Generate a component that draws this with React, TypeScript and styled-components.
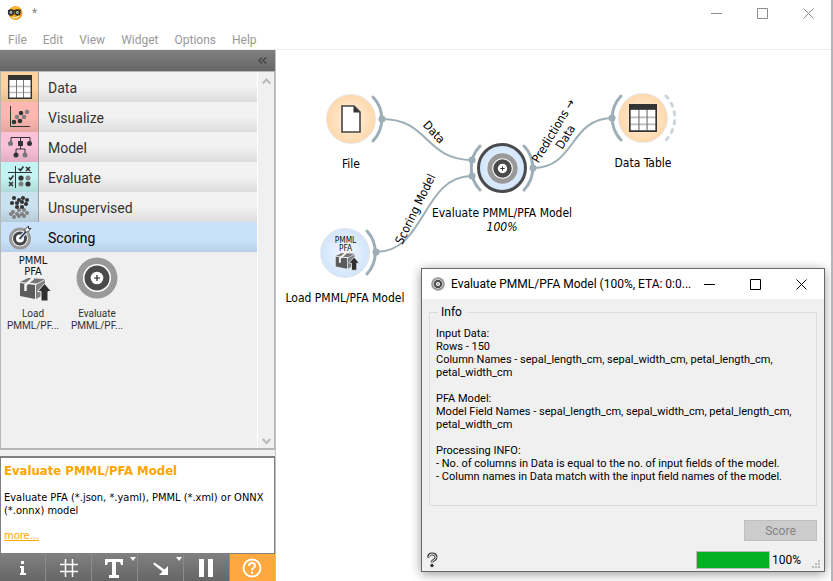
import React from "react";
import styled, { createGlobalStyle, css } from "styled-components";

const tahoma = `"DejaVu Sans Condensed", "DejaVu Sans", sans-serif`;
const segoe = `Roboto, "Noto Sans", sans-serif`;

const GlobalStyle = createGlobalStyle`
  * { box-sizing: border-box; }
  body { margin: 0; background: #fff; font-family: ${tahoma}; }
  button { font: inherit; color: inherit; border: 0; padding: 0; background: none; }
  svg { flex: none; }
`;

const Window = styled.div`
  display: flex;
  flex-direction: column;
  height: 100vh;
  overflow: hidden;
  border-right: 2px solid #b4b4bc;
  background: #fff;
`;

const TitleBar = styled.header`
  display: flex;
  align-items: center;
  height: 28px;
  padding: 0 0 2px 7px;
  gap: 9px;
  color: #888;
  font: 12px ${segoe};
`;

const TitleText = styled.span`
  flex: 1;
  min-width: 0;
  white-space: nowrap;
`;

const WindowButtons = styled.div`
  display: flex;
  flex: none;
`;

const WindowButton = styled.button<{ $tone: string }>`
  display: flex;
  align-items: center;
  justify-content: center;
  width: 46px;
  height: 28px;
  color: ${(p) => p.$tone};
`;

const MenuBar = styled.nav`
  display: flex;
  height: 22px;
  padding-left: 8px;
  gap: 16px;
  border-bottom: 1px solid #eee;
  color: #999;
  font: 12px/25px ${segoe};
`;

const Main = styled.div`
  display: flex;
  flex: 1;
  min-height: 0;
`;

const Sidebar = styled.aside`
  display: flex;
  flex-direction: column;
  width: 275px;
  flex: none;
  background: #f0f0f0;
`;

const DockHeader = styled.div`
  display: flex;
  align-items: center;
  justify-content: flex-end;
  height: 21px;
  padding-right: 8px;
  color: #444;
  background: linear-gradient(#808080, #666);
`;

const ToolBox = styled.div`
  display: flex;
  flex: 1;
  min-height: 0;
  border: 1px solid #b4b8b8;
  border-width: 1px 1px 2px;
`;

const Categories = styled.div`
  flex: 1;
  border-right: 1px solid #fff;
`;

const CategoryTab = styled.button<{ $active?: boolean }>`
  display: flex;
  align-items: stretch;
  width: 100%;
  height: 30px;
  text-align: left;
  color: ${(p) => (p.$active ? "#000" : "#333")};
  font: 14px/32px ${segoe};
  background: ${(p) =>
    p.$active
      ? "linear-gradient(#cae1fc 60%, #b8cfea)"
      : "linear-gradient(#f2f2f2 50%, #dcdcdc)"};
`;

const CategoryIcon = styled.span<{ $tint?: string }>`
  display: flex;
  align-items: center;
  justify-content: center;
  height: 30px;
  width: 38px;
  margin-right: 9px;
  border-right: 1px solid ${(p) => (p.$tint ? "#a0a0a0" : "transparent")};
  ${(p) =>
    p.$tint &&
    css`
      background: linear-gradient(transparent 50%, rgba(0, 0, 0, 0.1)), ${p.$tint};
    `}
`;

const WidgetGrid = styled.div`
  display: flex;
  padding-top: 2px;
`;

const WidgetButton = styled.button`
  display: flex;
  flex-direction: column;
  align-items: center;
  width: 64px;
  gap: 6px;
  color: #333;
  font-family: ${segoe};
  font-size: 10px;
  line-height: 12px;
`;

const WidgetIcon = styled.span`
  display: flex;
  align-items: center;
  height: 48px;
`;

const ScrollBar = styled.div`
  display: flex;
  flex-direction: column;
  justify-content: space-between;
  align-items: center;
  width: 16px;
  padding: 6px 0 3px;
  color: #b8b8b8;
`;

const Description = styled.section`
  height: 98px;
  margin-top: 6px;
  padding: 6px 3px;
  border: 1px solid #808080;
  border-top-width: 2px;
  background: #fff;
  color: #000;
  font-size: 11px;
  line-height: 13px;
`;

const DescriptionTitle = styled.h2`
  margin: 0 0 13px;
  color: #ffa500;
  font-size: 13px;
  line-height: 14px;
`;

const Paragraph = styled.p`
  margin: 0 0 12px;
`;

const MoreLink = styled.a`
  color: #ffa500;
`;

const ToolBar = styled.div`
  display: grid;
  grid-template-columns: repeat(5, 46px) 1fr;
  height: 27px;
  background: linear-gradient(#808080, #666);
`;

const ToolButton = styled.button<{ $highlight?: boolean }>`
  display: flex;
  align-items: center;
  justify-content: center;
  border-right: 1px solid ${(p) => (p.$highlight ? "transparent" : "#8c8c8c")};
  color: #fff;
  ${(p) => p.$highlight && "background: #ffa840;"}
`;

const Canvas = styled.main`
  position: relative;
  flex: 1;
  overflow: hidden;
  border-left: 1px solid #c0c0c8;
  background: #fff;
`;

const Links = styled.svg`
  position: absolute;
  inset: 0;
  width: 100%;
  height: 100%;
  font: 12px ${tahoma};
`;

const Node = styled.div<{ $x: number; $y: number }>`
  position: absolute;
  left: ${(p) => p.$x}px;
  top: ${(p) => p.$y}px;
  display: flex;
  flex-direction: column;
  align-items: center;
  width: 160px;
  margin: -25px 0 0 -80px;
  gap: 13px;
  text-align: center;
  font-size: 12px;
  line-height: 14px;
  color: #000;
`;

const NodeDisc = styled.div<{ $kind: "data" | "scoring"; $selected?: boolean }>`
  display: flex;
  align-items: center;
  justify-content: center;
  width: 50px;
  height: 50px;
  border-radius: 50%;
  border: ${(p) => (p.$selected ? "3px solid #4a4a4c" : "1px solid #e4e6e8")};
  background: ${(p) =>
    p.$kind === "data"
      ? "radial-gradient(#fff1e0, #ffcf98)"
      : "radial-gradient(#f4f9ff, #c4ddfb)"};
`;

const Progressed = styled.em`
  display: block;
`;

const Dialog = styled.section`
  position: absolute;
  left: 145px;
  top: 218px;
  width: 404px;
  border: 1px solid #66686a;
  background: #f0f0f0;
  box-shadow: 0 2px 10px rgba(0, 0, 0, 0.4);
`;

const DialogTitle = styled.header`
  display: flex;
  align-items: center;
  height: 30px;
  padding: 0 0 0 9px;
  gap: 6px;
  background: #fff;
  color: #000;
  font: 12px ${segoe};
`;

const DialogBody = styled.div`
  padding: 6px 7px 1px;
`;

const InfoGroup = styled.fieldset`
  height: 201px;
  margin: 0;
  padding: 8px 6px;
  border: 1px solid #dcdcdc;
  font: 11px/13px ${segoe};
`;

const Legend = styled.legend`
  margin-left: 2px;
  padding: 0 5px 0 3px;
  font: 12px/14px ${segoe};
`;

const Lines = styled.p`
  margin: 0 0 13px;
  white-space: pre-line;
`;

const Actions = styled.div`
  display: flex;
  justify-content: flex-end;
  margin-top: 14px;
`;

const ScoreButton = styled.button`
  && {
    width: 73px;
    height: 21px;
    border: 1px solid #bfbfbf;
    background: #ccc;
    color: #838383;
    font: 12px ${segoe};
  }
`;

const StatusBar = styled.footer`
  display: flex;
  align-items: center;
  height: 29px;
  padding-top: 8px;
  font: 12px ${segoe};
`;

const HelpButton = styled.button`
  display: flex;
  margin: 0 auto 0 -2px;
`;

const Progress = styled.progress`
  appearance: none;
  width: 74px;
  height: 18px;
  margin-right: 2px;
  border: 1px solid #bcbcbc;
  background: #e6e6e6;
  &::-webkit-progress-bar { background: #e6e6e6; }
  &::-webkit-progress-value { background: #06b025; }
`;

const Grip = styled.svg`
  align-self: flex-end;
  margin: 0 -4px 1px 11px;
`;

const MinIcon = () => (
  <svg width="11" height="11" stroke="currentColor"><path d="M0 5.500h11" /></svg>
);
const MaxIcon = () => (
  <svg width="11" height="11" stroke="currentColor" fill="none"><path d="M.5.5h10v10H.5z" /></svg>
);
const CloseIcon = () => (
  <svg width="11" height="11" stroke="currentColor"><path d="M.5.5l10 10M10.500.5l-10 10" /></svg>
);

const Controls = ({ tone }: { tone: string }) => (
  <WindowButtons>
    <WindowButton $tone={tone} aria-label="Minimize"><MinIcon /></WindowButton>
    <WindowButton $tone={tone} aria-label="Maximize"><MaxIcon /></WindowButton>
    <WindowButton $tone={tone} aria-label="Close"><CloseIcon /></WindowButton>
  </WindowButtons>
);

const AppIcon = () => (
  <svg width="16" height="16" viewBox="0 0 16 16">
    <circle cx="8.500" cy="8" r="7" fill="#f7a11b" />
    <path d="M4 3.500Q8.500 0 13 3.500" fill="#ffc04a" />
    <path d="M1 5.500h13" stroke="#333" strokeWidth="1.200" />
    <circle cx="4" cy="7.500" r="2.300" fill="#d8d8d8" stroke="#2b2b2b" strokeWidth="1.700" />
    <circle cx="10.500" cy="7.500" r="2.300" fill="#d8d8d8" stroke="#2b2b2b" strokeWidth="1.700" />
    <path d="M3.500 8.300l1.200-1.600M10 8.300l1.200-1.600" stroke="#555" />
    <path d="M5 12q3.500 2 7-1" stroke="#fff3c0" strokeWidth="1.300" fill="none" />
  </svg>
);

const TableIcon = ({ size = 24 }: { size?: number }) => (
  <svg width={size} height={size} viewBox="0 0 24 24">
    <path d="M1 1h22v22H1z" fill="#fff" />
    <path d="M1 11.500h22M1 17.500h22" stroke="#bbb" strokeWidth="1.500" />
    <path d="M8.500 4v19M15.500 4v19" stroke="#777" />
    <path d="M.7.7h22.600v22.600H.7z" fill="none" stroke="#333" strokeWidth="1.400" />
    <path d="M0 0h24v5H0z" fill="#333" />
  </svg>
);

const dots = (points: number[][], fill: string, r: number) =>
  points.map(([x, y]) => <circle key={`${x}-${y}`} cx={x} cy={y} r={r} fill={fill} />);

const ScatterIcon = () => (
  <svg width="24" height="24">
    <path d="M2.500 1v20.500H22" stroke="#333" fill="none" />
    {dots([[9, 12], [16, 12], [19, 7]], "#808080", 2.3)}
    {dots([[6, 17], [12, 16], [13, 8]], "#333", 2.3)}
  </svg>
);

const TreeIcon = () => (
  <svg width="24" height="24">
    <path d="M3 8V2.500h19V8M12.500 2.500V14M8 19v-5h9v5" stroke="#333" fill="none" />
    <path d="M10 6h5v5h-5z" fill="#333" />
    {dots([[2.5, 8.5], [17, 20]], "#777", 2.5)}
    {dots([[21.5, 8.5], [8, 20]], "#333", 2.5)}
  </svg>
);

const EvaluateIcon = () => (
  <svg width="24" height="24">
    <path d="M7.500 1v22M0 7.500h24" stroke="#333" />
    <path d="M10.500 3.500l2 2 3-4M1 12.500l1.500 2 3-4M18 2l4 4M22 2l-4 4M1 17l4 4M5 17l-4 4" stroke="#333" strokeWidth="1.600" fill="none" />
    {dots([[20, 13], [13, 19]], "#808080", 2.5)}
    {dots([[13, 13], [20, 19]], "#333", 2.6)}
  </svg>
);

const ClusterIcon = () => (
  <svg width="24" height="24">
    {dots([[5, 17], [11, 15], [16, 15], [3, 19], [9, 19], [14, 19], [19, 18], [6, 22], [11, 21], [16, 21]], "#808080", 2)}
    {dots([[6, 3], [11, 5], [15, 3], [19, 5], [4, 8], [9, 8], [14, 7], [18, 9], [9, 12], [14, 12]], "#333", 2.1)}
  </svg>
);

const TargetIcon = () => (
  <svg width="26" height="26" viewBox="0 0 26 26">
    <circle cx="13" cy="14.500" r="9.500" fill="#f4f6fa" stroke="#999" strokeWidth="3" />
    <circle cx="13" cy="14.500" r="5.500" fill="#fff" stroke="#444" strokeWidth="3" />
    <path d="M12.500 15L20 6.500" stroke="#cae1fc" strokeWidth="4" />
    <path d="M12.500 15L20 6.500" stroke="#333" strokeWidth="1.500" />
    <path d="M18 5.500L21.500 2v2.500H24L20.500 8H18z" fill="#fff" stroke="#333" />
  </svg>
);

const RingsIcon = ({ size }: { size: number }) => (
  <svg width={size} height={size} viewBox="0 0 42 42">
    <circle cx="21" cy="21" r="20.500" fill="#999" />
    <circle cx="21" cy="21" r="14" fill="#fff" />
    <circle cx="21" cy="21" r="12.500" fill="#4a4a4a" />
    <circle cx="21" cy="21" r="6.300" fill="#fff" />
    <path d="M18 21h6M21 18v6" stroke="#222" strokeWidth="1.200" />
  </svg>
);

const PmmlIcon = ({ width, height }: { width: number; height: number }) => (
  <svg width={width} height={height} viewBox="0 0 36 48" fontFamily="DejaVu Sans Condensed, sans-serif" fontSize="11" textAnchor="middle" fill="#111" overflow="visible">
    <text>
      <tspan x="18" y="10">PMML</tspan>
      <tspan x="18" y="21">PFA</tspan>
    </text>
    <path d="M5 28l8-4 17 1-8 4.500z" fill="#777" />
    <path d="M5 29l15 2v14L5 42z" fill="#5c5c5c" />
    <path d="M21 31l9-5v14l-9 5z" fill="#808080" />
    <path d="M10.500 31l8-7M10.500 30v7" stroke="#f4f4f4" strokeWidth="2.500" />
    <path d="M29.500 29.500l7 8H33V47h-7v-9.500h-3.500z" fill="#2e2e2e" stroke="#f0f0f0" />
  </svg>
);

const FileIcon = () => (
  <svg width="20" height="28" viewBox="0 0 20 28">
    <path d="M1 1h12l6 6v20H1z" fill="#fff" stroke="#444" strokeWidth="1.600" />
    <path d="M12.500 1l6.500 6.500h-6.500z" fill="#333" />
  </svg>
);

const Chevron = ({ up }: { up?: boolean }) => (
  <svg width="9" height="7" fill="none" stroke="currentColor" strokeWidth="2">
    <path d={up ? "M.7 5.500l3.800-4 3.800 4" : "M.7 1l3.800 4 3.800-4"} />
  </svg>
);

const categories = [
  { name: "Data", tint: "#ffd39f", icon: <TableIcon /> },
  { name: "Visualize", tint: "#ffb7b1", icon: <ScatterIcon /> },
  { name: "Model", tint: "#fac1d9", icon: <TreeIcon /> },
  { name: "Evaluate", tint: "#c3f3f3", icon: <EvaluateIcon /> },
  { name: "Unsupervised", tint: "#cae1ef", icon: <ClusterIcon /> },
  { name: "Scoring", icon: <TargetIcon /> },
];

const LinkLayer = () => (
  <Links>
    <g fill="none" stroke="#9caeb7" strokeWidth="2">
      <path d="M106 69C153 69 149 110 196 110" />
      <path d="M100 202C150 202 146 126 196 126" />
      <path d="M257 118C300 118 293 68 337 68" />
    </g>
    <g fill="none" stroke="#9caeb7" strokeWidth="3" strokeLinecap="round">
      <path d="M97 47a32 32 0 0 1 0 44" />
      <path d="M91 181a32 32 0 0 1 0 43" />
      <path d="M204 96a32 32 0 0 0 0 44" />
      <path d="M248 96a32 32 0 0 1 0 44" />
      <path d="M345 46a32 32 0 0 0 0 44" />
      <path d="M390 46a32 32 0 0 1 0 44" stroke="#ccd6da" strokeDasharray="3 6" />
    </g>
    {dots([[106, 69], [100, 202], [196, 110], [196, 126], [257, 118], [336, 68]], "#9caeb7", 3.5)}
    <g textAnchor="middle" fill="#000">
      <text transform="translate(155 85) rotate(47)">Data</text>
      <text transform="translate(143 161) rotate(-64)">Scoring Model</text>
      <text transform="translate(281 83) rotate(-59)">Predictions →</text>
      <text transform="translate(293 89) rotate(-59)">Data</text>
    </g>
  </Links>
);

export default function App() {
  return (
    <Window>
      <GlobalStyle />
      <TitleBar>
        <AppIcon />
        <TitleText>*</TitleText>
        <Controls tone="#8c8c8c" />
      </TitleBar>
      <MenuBar>
        {["File", "Edit", "View", "Widget", "Options", "Help"].map((m) => (
          <button key={m}>{m}</button>
        ))}
      </MenuBar>
      <Main>
        <Sidebar>
          <DockHeader>
            <svg width="9" height="7" fill="none" stroke="currentColor" strokeWidth="1.500">
              <path d="M4 .5l-3 3 3 3M8 .5l-3 3 3 3" />
            </svg>
          </DockHeader>
          <ToolBox>
            <Categories>
              {categories.map((c) => (
                <CategoryTab key={c.name} $active={!c.tint}>
                  <CategoryIcon $tint={c.tint}>{c.icon}</CategoryIcon>
                  {c.name}
                </CategoryTab>
              ))}
              <WidgetGrid>
                <WidgetButton>
                  <WidgetIcon><PmmlIcon width={36} height={48} /></WidgetIcon>
                  <span>Load<br />PMML/PF...</span>
                </WidgetButton>
                <WidgetButton>
                  <WidgetIcon><RingsIcon size={42} /></WidgetIcon>
                  <span>Evaluate<br />PMML/PF...</span>
                </WidgetButton>
              </WidgetGrid>
            </Categories>
            <ScrollBar>
              <Chevron up />
              <Chevron />
            </ScrollBar>
          </ToolBox>
          <Description>
            <DescriptionTitle>Evaluate PMML/PFA Model</DescriptionTitle>
            <Paragraph>Evaluate PFA (*.json, *.yaml), PMML (*.xml) or ONNX (*.onnx) model</Paragraph>
            <MoreLink href="#more">more...</MoreLink>
          </Description>
          <ToolBar>
            <ToolButton aria-label="Info">
              <svg width="8" height="16" fill="#fff"><path d="M2 1h3v3H2zM1 6h4v7h2v2H1v-2h1V8H1z" /></svg>
            </ToolButton>
            <ToolButton aria-label="Grid">
              <svg width="18" height="18" stroke="#fff" strokeWidth="1.500"><path d="M5.500 0v18M12.500 0v18M0 5.500h18M0 12.500h18" /></svg>
            </ToolButton>
            <ToolButton aria-label="Text">
              <svg width="44" height="26" fill="#fff"><path d="M12 4h18v6h-2l-1-3h-4v13h3v3H16v-3h3V7h-4l-1 3h-2zM37 2h6l-3 4z" /></svg>
            </ToolButton>
            <ToolButton aria-label="Arrow">
              <svg width="44" height="26" fill="#fff"><path d="M37 2h6l-3 4zM29 11v9h-9l3.500-3.500L14 9l1.500-1.500L25.500 14.500z" /></svg>
            </ToolButton>
            <ToolButton aria-label="Pause">
              <svg width="16" height="18" fill="#fff"><path d="M0 0h5v18H0zM9 0h5v18H9z" /></svg>
            </ToolButton>
            <ToolButton aria-label="Help" $highlight>
              <svg width="20" height="20" fill="none" stroke="#fff" strokeWidth="1.800">
                <circle cx="10" cy="10" r="8.500" />
                <path d="M7 8q0-3 3-3t3 2.700q0 1.300-1.600 2.300T10 12.500M10 13.800v2" strokeWidth="2" />
              </svg>
            </ToolButton>
          </ToolBar>
        </Sidebar>
        <Canvas>
          <LinkLayer />
          <Node $x={75} $y={69}>
            <NodeDisc $kind="data"><FileIcon /></NodeDisc>
            <span>File</span>
          </Node>
          <Node $x={367} $y={68}>
            <NodeDisc $kind="data"><TableIcon size={28} /></NodeDisc>
            <span>Data Table</span>
          </Node>
          <Node $x={226} $y={118}>
            <NodeDisc $kind="scoring" $selected><RingsIcon size={31} /></NodeDisc>
            <span>Evaluate PMML/PFA Model<Progressed>100%</Progressed></span>
          </Node>
          <Node $x={69} $y={203}>
            <NodeDisc $kind="scoring"><PmmlIcon width={27} height={36} /></NodeDisc>
            <span>Load PMML/PFA Model</span>
          </Node>
          <Dialog role="dialog" aria-label="Evaluate PMML/PFA Model">
            <DialogTitle>
              <RingsIcon size={14} />
              <TitleText>Evaluate PMML/PFA Model (100%, ETA: 0:0...</TitleText>
              <Controls tone="#000" />
            </DialogTitle>
            <DialogBody>
              <InfoGroup>
                <Legend>Info</Legend>
                <Lines>{"Input Data:\nRows - 150\nColumn Names - sepal_length_cm, sepal_width_cm, petal_length_cm,\npetal_width_cm"}</Lines>
                <Lines>{"PFA Model:\nModel Field Names - sepal_length_cm, sepal_width_cm, petal_length_cm,\npetal_width_cm"}</Lines>
                <Lines>{"Processing INFO:\n- No. of columns in Data is equal to the no. of input fields of the model.\n- Column names in Data match with the input field names of the model."}</Lines>
              </InfoGroup>
              <Actions>
                <ScoreButton disabled>Score</ScoreButton>
              </Actions>
              <StatusBar>
                <HelpButton aria-label="Help">
                  <svg width="11" height="16" fill="none">
                    <path d="M2 5.500Q1 2 5 2t4 3q0 2-2 3t-2 2.500" stroke="#444" strokeWidth="3" />
                    <path d="M2 5Q2 2 5 2t4 3q0 2-2 3t-2 2" stroke="#eee" />
                    <circle cx="5" cy="13.500" r="1.700" fill="#333" />
                  </svg>
                </HelpButton>
                <Progress value={100} max={100} aria-label="Progress" />
                <span>100%</span>
                <Grip width="9" height="9" fill="#bbb">
                  <path d="M6 0h2v2H6zM3 3h2v2H3zM6 3h2v2H6zM0 6h2v2H0zM3 6h2v2H3zM6 6h2v2H6z" />
                </Grip>
              </StatusBar>
            </DialogBody>
          </Dialog>
        </Canvas>
      </Main>
    </Window>
  );
}
